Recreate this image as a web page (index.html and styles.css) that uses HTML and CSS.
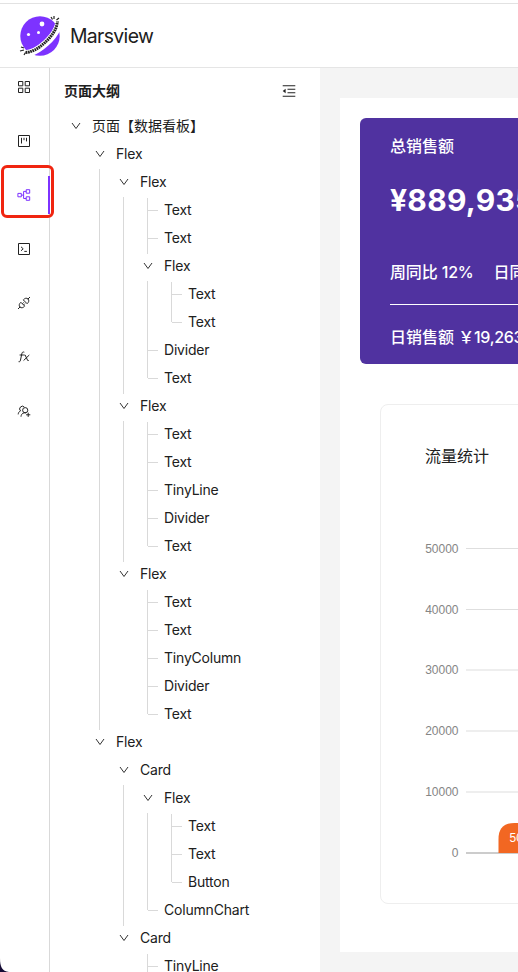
FILE: index.html
```html
<!DOCTYPE html>
<html lang="zh">
<head>
<meta charset="utf-8">
<title>Marsview</title>
<link rel="stylesheet" href="styles.css">
</head>
<body>
<div class="app">
  <header class="header">
    <svg class="logo" width="44" height="44" viewBox="0 0 44 44">
      <circle cx="22" cy="22" r="19.7" fill="#7d33ff"/>
      <circle cx="24" cy="10" r="2.4" fill="#fff"/>
      <circle cx="10.5" cy="20.5" r="1.6" fill="#fff"/>
      <circle cx="20.5" cy="18.5" r="1.5" fill="#fff"/>
      <path d="M38 5C44 8 38 20 28 29C18 38 6 43 4 37" fill="none" stroke="#fff" stroke-width="7"/>
      <path d="M39 9C39 15 33 23 27 28.500C20 35 13 38.500 7 38.500" fill="none" stroke="#222" stroke-width="3" stroke-dasharray="1.700 .6"/>
      <path d="M33 3l1.500 2.500M36 2l0 3M41 4l-2.500 2M41 8l-3 0M3 33l3 1M2 37l4-1M6 41l1.500-2.500" stroke="#222" stroke-width="1.200"/>
    </svg>
    <span class="brand">Marsview</span>
  </header>
  <div class="body">
    <nav class="rail">
      <a class="tool"><svg width="14" height="14" viewBox="0 0 14 14"><path d="M1.500 1.500h4.300v4.300H1.500zM8.200 1.500h4.300v4.300H8.200zM1.500 8.200h4.300v4.300H1.500zM8.200 8.200h4.300v4.300H8.200z"/></svg></a>
      <a class="tool"><svg width="14" height="14" viewBox="0 0 14 14"><path d="M1.500 1.500h11v11h-11zM4.500 3.800v5.700M7 3.800v2.400M9.500 3.800v3.600"/></svg></a>
      <a class="tool active"><svg width="14" height="14" viewBox="0 0 14 14"><path d="M.9 5.400h3.400v3.400H.9zM9.200 1.700h3.500v3.500H9.200zM9.200 8.800h3.500v3.500H9.200zM4.300 7.100h2.300M9.200 3.400H6.600v7.100h2.600"/></svg></a>
      <a class="tool"><svg width="14" height="14" viewBox="0 0 14 14"><path d="M1.500 1.500h11v11h-11zM4 4.800l2.200 2L4 8.800M7.300 9.400h2.600"/></svg></a>
      <a class="tool"><svg width="14" height="14" viewBox="0 0 14 14"><path d="M1 13l2-2M3 11c-1.400-1.600-.8-3.200.9-4.700l3.800 3.800C6.200 11.800 4.400 12.400 3 11zM5.400 7.700l1.300-1.300M6.600 8.900l1.300-1.300M6.300 3.900l3.800 3.800c1.700-1.500 2.300-3.200.9-4.700-1.500-1.400-3.200-.8-4.700.9zM11 3l2-2"/></svg></a>
      <a class="tool"><svg width="14" height="14" viewBox="0 0 14 14"><path d="M7.300 2.200C5.800 1.600 5.100 2.300 4.800 3.800L3.500 10c-.3 1.500-.8 2-1.900 1.700M2.600 5h4.300M7.300 5h.8l2.600 5.500h1M12.300 5L6.600 10.500"/></svg></a>
      <a class="tool"><svg width="14" height="14" viewBox="0 0 14 14"><path d="M3.500 6.900A2.700 2.700 0 1 1 7.300 3M3.500 6.900C2 7.600 1.300 8.800 1.200 10.400M5.800 9.300C4.700 10 4.100 11.200 4 12.700M5.800 9.300c.8-.5 1.900-.6 3.200-.5M11.200 8.700v4.200M9.100 10.800h4.200"/><circle cx="8.200" cy="6.200" r="2.600"/></svg></a>
      <span class="highlight"></span>
    </nav>
    <aside class="outline">
      <div class="outline-head">
        <h2>页面大纲</h2>
        <svg width="14" height="14" viewBox="0 0 14 14"><path d="M.7 1.700h12.600M5.500 5.300h7.800M5.500 8.700h7.800M.7 12.300h12.600" fill="none" stroke="#222" stroke-width="1.100"/><path d="M.7 7l2.900-2.300v4.600z" fill="#222"/></svg>
      </div>
      <ul class="tree" id="tree"></ul>
    </aside>
    <main class="stage">
      <div class="page">
        <section class="sales">
          <div class="sales-title">总销售额</div>
          <div class="sales-total">¥889,935</div>
          <div class="sales-rates"><span>周同比 12%</span><span>日同比 11%</span></div>
          <div class="sales-day">日销售额 <span class="day-value">￥19,263</span></div>
        </section>
        <section class="traffic">
          <h3>流量统计</h3>
          <svg class="chart" width="240" height="330" viewBox="0 0 240 330">
            <g class="grid">
              <path d="M41 16.500h199M41 77.500h199M41 138h199M41 199h199M41 260h199"/>
              <path class="base" d="M41 321h199"/>
            </g>
            <g class="axis">
              <text x="33.500" y="21">50000</text><text x="33.500" y="82">40000</text><text x="33.500" y="142">30000</text>
              <text x="33.500" y="203">20000</text><text x="33.500" y="264">10000</text><text x="33.500" y="325">0</text>
            </g>
            <path d="M73.500 321v-14q0-16 16-16h40v30z" fill="#f26722"/>
            <text class="value" x="84.500" y="310">5000</text>
          </svg>
        </section>
      </div>
    </main>
  </div>
  <svg class="corner" width="10" height="14" viewBox="0 0 10 14"><path d="M0 0C0 9 2 13 9 14H0z" fill="#160c35"/></svg>
</div>
<script src="tree.js"></script>
</body>
</html>
```
FILE: tree.js
```js
const flex = (...children) => ({ name: 'Flex', children });
const card = (...children) => ({ name: 'Card', children });

const data = [{
  name: '页面【数据看板】',
  children: [
    flex(
      flex('Text', 'Text', flex('Text', 'Text'), 'Divider', 'Text'),
      flex('Text', 'Text', 'TinyLine', 'Divider', 'Text'),
      flex('Text', 'Text', 'TinyColumn', 'Divider', 'Text')
    ),
    flex(
      card(flex('Text', 'Text', 'Button'), 'ColumnChart'),
      card('TinyLine', 'Text')
    )
  ]
}];

const chevron = '<svg width="10" height="8" viewBox="0 0 10 8"><path d="M1 1l4 5.500L9 1"/></svg>';

function render(nodes) {
  return nodes.map(node => {
    if (typeof node === 'string') {
      return `<li class="leaf"><div class="row"><span class="switcher"></span><span>${node}</span></div></li>`;
    }
    return `<li><div class="row"><span class="switcher">${chevron}</span><span>${node.name}</span></div><ul>${render(node.children)}</ul></li>`;
  }).join('');
}

document.getElementById('tree').innerHTML = render(data);
```
FILE: styles.css
```css
* { box-sizing: border-box; }
body {
  margin: 0;
  overflow: hidden;
  background: #fff;
  color: #202020;
  font: 14px/28px Inter, "Noto Sans CJK SC", sans-serif;
}
.app {
  position: relative;
  display: flex;
  flex-direction: column;
  height: 972px;
  padding-top: 3px;
  overflow: hidden;
}
.header {
  display: flex;
  align-items: center;
  flex: none;
  height: 65px;
  padding-left: 18px;
  border-top: 1px solid #e2e2e2;
  border-bottom: 1px solid #e5e5e5;
}
.logo { flex: none; }
.brand {
  margin-left: 8px;
  font-size: 19.4px;
  letter-spacing: -0.65px;
}
.body { display: flex; flex: 1; min-height: 0; }

.rail {
  position: relative;
  flex: none;
  width: 50px;
  border-right: 1px solid #d9d9d9;
}
.tool {
  display: flex;
  align-items: center;
  justify-content: center;
  width: 50px;
  height: 38px;
  margin-bottom: 16px;
  padding-right: 2px;
  color: #222;
}
.tool svg { fill: none; stroke: currentColor; stroke-width: 1; }
.tool.active { color: #7d33ff; border-right: 2px solid #7d33ff; padding-right: 0; }
.highlight {
  position: absolute;
  left: 1px;
  top: 97px;
  width: 53px;
  height: 53px;
  border: 3px solid #f02510;
  border-radius: 6px;
}

.outline { flex: none; width: 270px; overflow: hidden; }
.outline-head {
  display: flex;
  align-items: center;
  justify-content: space-between;
  height: 44px;
  padding: 2px 24px 0 14px;
}
.outline h2 { margin: 0; font-size: 14px; font-weight: 700; }
.tree, .tree ul { margin: 0; padding: 0; list-style: none; }
.tree { padding-left: 14px; }
.tree ul {
  margin: 0 0 -2px 11px;
  padding: 0 0 2px 12px;
  border-left: 1px solid transparent;
}
.tree li:not(:last-child) > ul {
  border-image: linear-gradient(transparent 2px, #d9d9d9 2px) 1;
  border-width: 0 0 0 1px;
}
.row {
  display: flex;
  height: 28px;
  letter-spacing: -0.2px;
  white-space: nowrap;
}
.tree > li > .row { letter-spacing: 0; }
.switcher {
  display: flex;
  align-items: center;
  justify-content: center;
  flex: none;
  width: 24px;
  margin-right: 4px;
}
.switcher svg { fill: none; stroke: #333; stroke-width: 1; margin-right: 1px; }
.leaf .switcher {
  display: block;
  width: 13px;
  height: 28px;
  margin: 2px 4px 0 11px;
  border-left: 1px solid #d9d9d9;
}
.leaf .switcher::before {
  content: "";
  display: block;
  width: 10px;
  height: 12px;
  border-bottom: 1px solid #d9d9d9;
}
.leaf:last-child .switcher { height: 12px; }

.stage {
  flex: 1;
  min-width: 0;
  padding: 30px 0 20px 20px;
  background: #f4f4f4;
  overflow: hidden;
}
.page {
  width: 600px;
  height: 854px;
  padding: 20px;
  background: #fff;
}
.sales {
  height: 246px;
  padding: 14px 30px 0;
  background: #5032a0;
  border-radius: 6px;
  color: #fff;
  font-size: 16px;
  font-weight: 500;
  white-space: nowrap;
}
.sales-title { height: 28px; }
.sales-total {
  height: 40px;
  margin-top: 20px;
  font-size: 30px;
  font-weight: 700;
  line-height: 40px;
  letter-spacing: 0.25px;
}
.sales-rates {
  display: flex;
  gap: 20px;
  height: 47px;
  margin-top: 38px;
  border-bottom: 1px solid #fff;
  letter-spacing: -0.15px;
}
.sales-day { margin-top: 18px; }
.day-value { letter-spacing: -0.3px; }
.traffic {
  margin: 40px 20px 0;
  height: 500px;
  padding: 37px 44px 0;
  border: 1px solid #eee;
  border-radius: 8px;
}
.traffic h3 { margin: 0; font-size: 16px; font-weight: 400; line-height: 28px; }
.chart { display: block; margin-top: 62px; }
.grid path { fill: none; stroke: #dedede; stroke-width: 1.2; }
.grid .base { stroke: #ccc; stroke-width: 2; }
.axis text {
  fill: #858585;
  font: 12px "Liberation Sans", sans-serif;
  text-anchor: end;
}
.value { fill: #fff; font: 12px "Liberation Sans", sans-serif; }
.corner { position: absolute; left: 0; bottom: 0; }
```
